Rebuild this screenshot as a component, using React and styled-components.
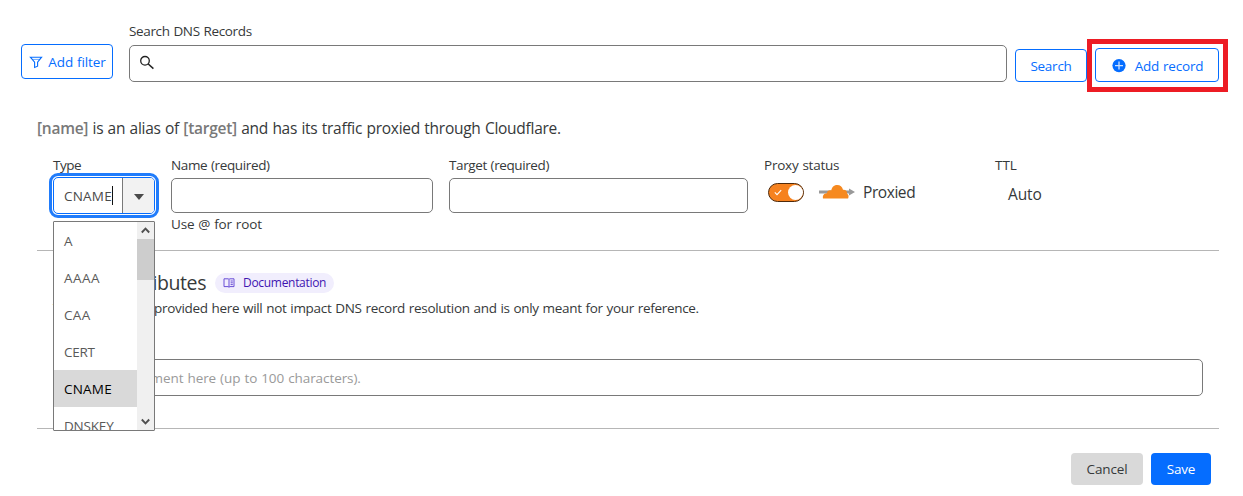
import React from "react";
import styled, { createGlobalStyle } from "styled-components";

const GlobalStyle = createGlobalStyle`
  *, *::before, *::after { box-sizing: border-box; }
  body {
    margin: 0;
    background: #fff;
    color: #36393a;
    font-family: "Open Sans", "Noto Sans", sans-serif;
    font-size: 13.5px;
    line-height: 20px;
    word-spacing: 0.6px;
  }
  button, input { font: inherit; letter-spacing: inherit; word-spacing: inherit; }
`;

const BLUE = "#056dff";

const Page = styled.main`
  width: 1243px;
  height: 496px;
  overflow: hidden;
  padding-top: 21px;
`;

const Toolbar = styled.div`
  display: flex;
  align-items: flex-start;
  padding-left: 21px;
`;

const OutlineButton = styled.button`
  display: flex;
  align-items: center;
  justify-content: center;
  flex: none;
  gap: ${(p) => p.$gap || 0}px;
  width: ${(p) => p.$w}px;
  height: ${(p) => p.$h}px;
  margin: ${(p) => p.$m || "0"};
  padding: ${(p) => p.$p || "0"};
  border: 1px solid ${BLUE};
  border-radius: 4px;
  background: #fff;
  color: ${BLUE};
  white-space: nowrap;
  letter-spacing: ${(p) => p.$ls || 0}px;
`;

const SearchField = styled.div`
  width: 878px;
  margin: 0 8px 0 16px;
`;

const Label = styled.label`
  display: block;
  height: 20px;
  white-space: nowrap;
  letter-spacing: ${(p) => p.$ls || 0}px;
`;

const SearchBox = styled.div`
  display: flex;
  align-items: center;
  height: 37px;
  margin-top: 4px;
  padding: 0 9px 2px;
  border: 1px solid #797979;
  border-radius: 5px;
`;

const Highlight = styled.div`
  flex: none;
  width: 141px;
  height: 53px;
  margin-top: 18px;
  padding: 4px 0 0 3px;
  border: 5px solid #ed1c24;
`;

const Summary = styled.p`
  margin: 25px 0 0 37px;
  height: 22px;
  font-size: 15.5px;
  line-height: 22px;
  white-space: nowrap;
  letter-spacing: ${(p) => p.$ls}px;
  b { color: #797979; font-weight: 600; }
`;

const RecordForm = styled.form`
  margin: 16px 24px 0 37px;
`;

const Fields = styled.div`
  display: flex;
  height: 96px;
  padding-left: 16px;
  border-bottom: 1px solid #b6b6b6;
`;

const Field = styled.div`
  flex: none;
  width: ${(p) => p.$w}px;
  margin-right: ${(p) => p.$mr || 0}px;
`;

const TextInput = styled.input`
  display: block;
  width: 100%;
  height: ${(p) => p.$h || 35}px;
  margin-top: ${(p) => p.$mt || 3}px;
  padding: 0;
  border: 1px solid #797979;
  border-radius: 5px;
  background: #fff;
  outline: 0;
  letter-spacing: ${(p) => p.$ls || 0}px;
  &::placeholder { color: #9a9a9a; opacity: 1; }
`;

const Hint = styled.div`
  margin-top: 1px;
  white-space: nowrap;
  letter-spacing: ${(p) => p.$ls}px;
`;

const TypeSelect = styled.div`
  position: relative;
  display: flex;
  height: 37px;
  margin-top: 2px;
  border: 1px solid ${BLUE};
  border-radius: 5px;
  outline: 3px solid #207cfb;
  outline-offset: 1px;
`;

const TypeValue = styled.div`
  display: flex;
  align-items: center;
  width: 68px;
  padding-left: 10px;
  color: #4a4a4a;
  letter-spacing: ${(p) => p.$ls}px;
`;

const Caret = styled.span`
  width: 1px;
  height: 19px;
  background: #111;
`;

const TypeToggle = styled.div`
  display: flex;
  flex: 1;
  align-items: center;
  justify-content: center;
  padding-top: 2px;
  border-left: 1px solid #797979;
  border-radius: 0 4px 4px 0;
  background: #f2f2f2;
`;

const Menu = styled.div`
  position: absolute;
  z-index: 2;
  top: 43px;
  left: -1px;
  display: flex;
  width: 102px;
  height: 210px;
  border: 1px solid #797979;
  border-radius: 1px;
  background: #fff;
  overflow: hidden;
`;

const Options = styled.ul`
  flex: 1;
  margin: 0;
  padding: 0;
  list-style: none;
`;

const Option = styled.li`
  height: 37px;
  padding-left: 10px;
  line-height: 38px;
  color: ${(p) => (p.$on ? "#000" : "#595959")};
  background: ${(p) => (p.$on ? "#d9d9d9" : "#fff")};
  letter-spacing: ${(p) => p.$ls || 0}px;
`;

const Scrollbar = styled.div`
  display: flex;
  flex-direction: column;
  width: 17px;
  background: #f0f0f0;
`;

const ScrollArrow = styled.div`
  display: flex;
  align-items: center;
  justify-content: center;
  height: 17px;
`;

const Thumb = styled.div`
  height: 41px;
  margin-bottom: auto;
  background: #cdcdcd;
`;

const ProxyRow = styled.div`
  display: flex;
  align-items: center;
  height: 24px;
  margin: 5px 0 0 4px;
  font-size: 15.5px;
  letter-spacing: ${(p) => p.$ls}px;
`;

const Switch = styled.div`
  display: flex;
  align-items: center;
  justify-content: space-between;
  width: 36px;
  height: 19px;
  margin: 1px 15px 0 0;
  padding: 0 0 0 5px;
  border: 1px solid #4f2a0b;
  border-radius: 10px;
  background: #f6821f;
`;

const Knob = styled.span`
  width: 15px;
  height: 15px;
  border-radius: 50%;
  background: #fff;
`;

const Cloud = styled.svg`
  margin-right: 8px;
`;

const TtlValue = styled.div`
  margin: 8px 0 0 13px;
  font-size: 15.5px;
  line-height: 22px;
  letter-spacing: ${(p) => p.$ls}px;
`;

const Attributes = styled.section`
  height: 178px;
  padding: 20px 16px 0;
  border-bottom: 1px solid #b6b6b6;
`;

const HeadingRow = styled.div`
  display: flex;
  align-items: center;
  height: 24px;
`;

const Heading = styled.h2`
  width: 162px;
  margin: 0;
  font-size: 19.5px;
  font-weight: 400;
  line-height: 24px;
  white-space: nowrap;
  letter-spacing: ${(p) => p.$ls}px;
`;

const DocLink = styled.a`
  display: flex;
  align-items: center;
  gap: 8px;
  width: 119px;
  height: 20px;
  margin-bottom: 1px;
  padding-left: 8px;
  border-radius: 10px;
  background: #f1eefd;
  color: #3f15b1;
  font-size: 12px;
  white-space: nowrap;
  letter-spacing: ${(p) => p.$ls}px;
`;

const Note = styled.p`
  margin: 3px 0 16px;
  white-space: nowrap;
  letter-spacing: ${(p) => p.$ls}px;
`;

const Actions = styled.div`
  display: flex;
  justify-content: flex-end;
  gap: 8px;
  padding: 24px 8px 0 0;
`;

const ActionButton = styled.button`
  width: ${(p) => p.$w}px;
  height: 32px;
  padding: 0;
  border: 0;
  border-radius: 4px;
  background: ${(p) => (p.$primary ? BLUE : "#d9d9d9")};
  color: ${(p) => (p.$primary ? "#fff" : "#36393a")};
  letter-spacing: ${(p) => p.$ls}px;
`;

const TYPES = [
  ["A", 0],
  ["AAAA", 0.5],
  ["CAA", 0.3],
  ["CERT", -0.3],
  ["CNAME", 0.2],
  ["DNSKEY", -0.2],
];

const FunnelIcon = () => (
  <svg width="14" height="14" viewBox="0 0 14 14" fill="none" stroke={BLUE} strokeWidth="1.1">
    <path d="M1.4 2.2H12.6L8.6 7.2V11.2L5.6 12.4V7.2Z" />
    <path d="M3.3 4.4H10.7" strokeWidth=".6" />
  </svg>
);

const SearchIcon = () => (
  <svg width="16" height="16" viewBox="0 0 16 16" fill="none" stroke="#222">
    <circle cx="6" cy="5.8" r="4.3" strokeWidth="1.3" />
    <path d="M9 8.8L14.4 13.6" strokeWidth="1.5" />
  </svg>
);

const PlusIcon = () => (
  <svg width="14" height="14" viewBox="0 0 14 14">
    <circle cx="7" cy="6.6" r="6.6" fill={BLUE} />
    <path d="M7 2.6V10.6M3 6.6H11" stroke="#cfe2ff" strokeWidth="1.3" />
  </svg>
);

const BookIcon = () => (
  <svg width="12" height="12" viewBox="0 0 12 12" fill="none" stroke="#6a4fd6" strokeWidth="1">
    <path d="M1 1.8H5.2L6 2.4L6.8 1.8H11V9.6H6.8L6 10.3L5.2 9.6H1ZM6 2.4V10.3" />
    <path d="M7.6 4H9.8M7.6 5.8H9.8M7.6 7.6H9.8" />
  </svg>
);

export default function App() {
  return (
    <>
      <GlobalStyle />
      <Page>
        <Toolbar>
          <OutlineButton $w={92} $h={35} $m="23px 0 0" $gap={5} $ls={-0.11} $p="1px 0 0 1px">
            <FunnelIcon />
            <span>Add filter</span>
          </OutlineButton>
          <SearchField>
            <Label $ls={-0.35}>Search DNS Records</Label>
            <SearchBox>
              <SearchIcon />
            </SearchBox>
          </SearchField>
          <OutlineButton $w={72} $h={33} $m="28px 0 0" $ls={-0.25} $p="1px 0 0">
            Search
          </OutlineButton>
          <Highlight>
            <OutlineButton $w={124} $h={34} $gap={9} $ls={-0.21} $p="2px 0 0 1px">
              <PlusIcon />
              <span>Add record</span>
            </OutlineButton>
          </Highlight>
        </Toolbar>

        <Summary $ls={-0.27}>
          <b>[name]</b> is an alias of <b>[target]</b> and has its traffic proxied through
          Cloudflare.
        </Summary>

        <RecordForm>
          <Fields>
            <Field $w={102} $mr={16}>
              <Label $ls={-0.45}>Type</Label>
              <TypeSelect>
                <TypeValue $ls={0.2}>
                  CNAME
                  <Caret />
                </TypeValue>
                <TypeToggle>
                  <svg width="10" height="6" viewBox="0 0 10 6">
                    <path d="M0 0H10L5 6Z" fill="#4a4a4a" />
                  </svg>
                </TypeToggle>
                <Menu>
                  <Options>
                    {TYPES.map(([name, ls]) => (
                      <Option key={name} $on={name === "CNAME"} $ls={ls}>
                        {name}
                      </Option>
                    ))}
                  </Options>
                  <Scrollbar>
                    <ScrollArrow>
                      <svg width="9" height="7" viewBox="0 0 9 7" fill="none">
                        <path d="M.8 5.5L4.5 1.7L8.2 5.5" stroke="#505050" strokeWidth="1.9" />
                      </svg>
                    </ScrollArrow>
                    <Thumb />
                    <ScrollArrow>
                      <svg width="9" height="7" viewBox="0 0 9 7" fill="none">
                        <path d="M.8 1.5L4.5 5.3L8.2 1.5" stroke="#505050" strokeWidth="1.9" />
                      </svg>
                    </ScrollArrow>
                  </Scrollbar>
                </Menu>
              </TypeSelect>
            </Field>
            <Field $w={262} $mr={16}>
              <Label $ls={-0.37}>Name (required)</Label>
              <TextInput />
              <Hint $ls={-0.16}>Use @ for root</Hint>
            </Field>
            <Field $w={299} $mr={16}>
              <Label $ls={-0.39}>Target (required)</Label>
              <TextInput />
            </Field>
            <Field $w={215} $mr={16}>
              <Label $ls={-0.22}>Proxy status</Label>
              <ProxyRow $ls={-0.43}>
                <Switch>
                  <svg width="8" height="7" viewBox="0 0 8 7" fill="none">
                    <path d="M.8 3.4L3 5.6L7.2 1.2" stroke="#fff" strokeWidth="1.1" />
                  </svg>
                  <Knob />
                </Switch>
                <Cloud width="36" height="16" viewBox="0 0 36 16">
                  <path d="M0 6.5H30V4.6L36 8L30 11.4V9.5H0Z" fill="#999" />
                  <path
                    d="M4 14.5C3.4 11.5 5 9.3 8 9.3C8 7 10 5.8 12.2 6.5C13 2.7 15.5 1 18.2 1C21.2 1 23.3 3 24 5.8C26.8 5.6 28.3 7.3 28.1 9.7C29.6 10.2 30 12.5 29.1 14.5Z"
                    fill="#f6891f"
                  />
                </Cloud>
                Proxied
              </ProxyRow>
            </Field>
            <Field $w={80}>
              <Label $ls={0}>TTL</Label>
              <TtlValue $ls={-0.15}>Auto</TtlValue>
            </Field>
          </Fields>

          <Attributes>
            <HeadingRow>
              <Heading $ls={-0.4}>Record Attributes</Heading>
              <DocLink $ls={-0.3}>
                <BookIcon />
                Documentation
              </DocLink>
            </HeadingRow>
            <Note $ls={-0.31}>
              The information provided here will not impact DNS record resolution and is only meant
              for your reference.
            </Note>
            <Label $ls={-0.2}>Comment</Label>
            <TextInput
              $h={37}
              $mt={5}
              $ls={-0.08}
              placeholder="Enter your comment here (up to 100 characters)."
            />
          </Attributes>

          <Actions>
            <ActionButton type="button" $w={72} $ls={-0.15}>
              Cancel
            </ActionButton>
            <ActionButton type="button" $primary $w={60} $ls={-0.15}>
              Save
            </ActionButton>
          </Actions>
        </RecordForm>
      </Page>
    </>
  );
}
